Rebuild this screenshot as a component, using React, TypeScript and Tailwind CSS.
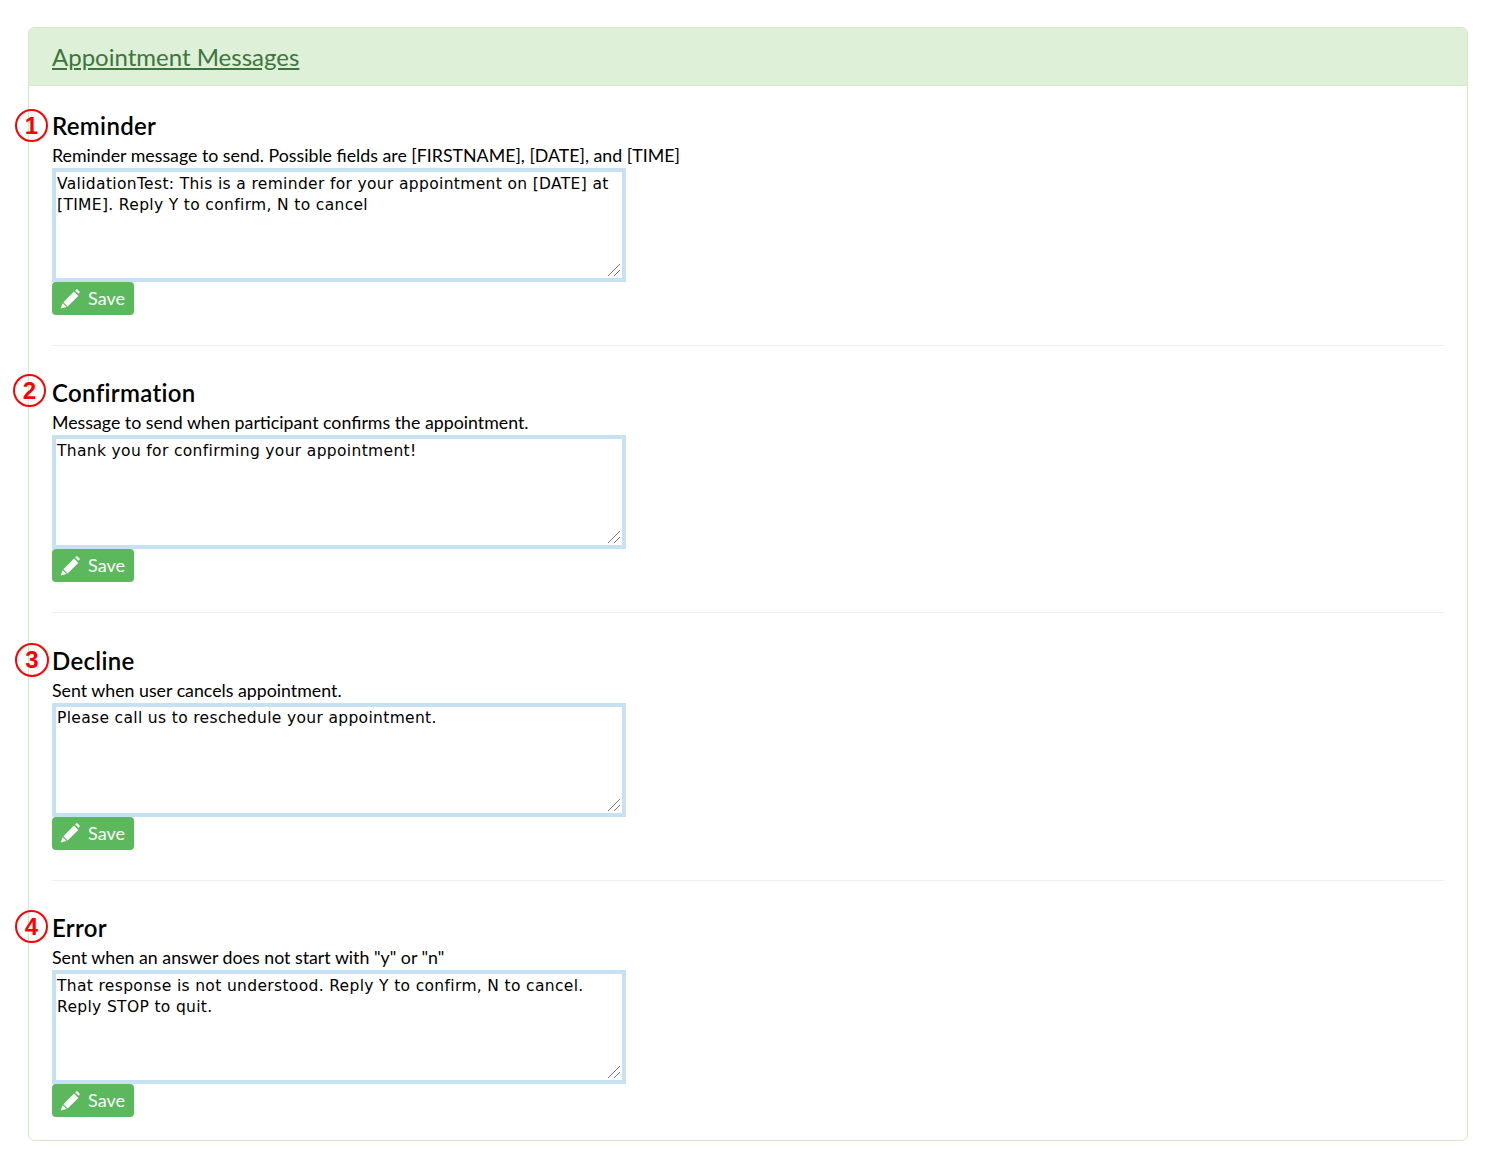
const sections = [
  { n: "1", title: "Reminder", desc: "Reminder message to send. Possible fields are [FIRSTNAME], [DATE], and [TIME]", value: "ValidationTest: This is a reminder for your appointment on [DATE] at [TIME]. Reply Y to confirm, N to cancel", pos: "left-[-37px] top-[0px] w-[33px] h-[33px]" },
  { n: "2", title: "Confirmation", desc: "Message to send when participant confirms the appointment.", value: "Thank you for confirming your appointment!", pos: "left-[-39px] top-[-2px] w-[33px] h-[33px]" },
  { n: "3", title: "Decline", desc: "Sent when user cancels appointment.", value: "Please call us to reschedule your appointment.", pos: "left-[-37px] top-[-1px] w-[34px] h-[34px]" },
  { n: "4", title: "Error", desc: 'Sent when an answer does not start with "y" or "n"', value: "That response is not understood. Reply Y to confirm, N to cancel. Reply STOP to quit.", pos: "left-[-37px] top-[-1px] w-[33px] h-[33px]" },
];

function Pencil() {
  return (
    <svg viewBox="0 0 20 20" className="w-[20px] h-[20px] shrink-0" fill="#fff">
      <path d="M15.2 1.4l1-.9c.4-.3.9-.3 1.3 0l2 2c.3.4.3.9 0 1.3l-1 1z" />
      <path d="M14 2.6l4.3 4.3L7.6 17.4 3.4 13.2z" />
      <path d="M2.6 14.2l3.9 3.9L.6 19.6z" />
    </svg>
  );
}

function Grip() {
  return (
    <svg viewBox="0 0 12 12" className="absolute right-[6px] bottom-[6px] w-[12px] h-[12px] pointer-events-none" fill="none" stroke="#666" strokeWidth="0.9">
      <path d="M0 12L12 0" />
      <path d="M6 12L12 6" />
    </svg>
  );
}

export default function App() {
  return (
    <div className="bg-white min-h-[1170px] pt-[27px] px-[28px] pb-[29px] font-['Lato','Liberation_Sans',sans-serif]">
      <div className="w-[1440px] border border-[#d6e9c6] rounded-[6px]">
        <div className="h-[58px] bg-[#dff0d8] border-b border-[#d6e9c6] rounded-t-[5px] px-[23px] flex items-center">
          <a className="text-[24px] leading-[28px] text-[#3c763d] underline">Appointment Messages</a>
        </div>
        <div className="px-[23px] pt-[23px] pb-[23px]">
          {sections.map((s, i) => (
            <div key={s.n}>
              {i > 0 && <hr className="border-0 border-t border-[#eeeeee] mt-[30px] mb-[30.4px]" />}
              <div className="relative">
                <div className={`absolute ${s.pos} rounded-full border-[2.5px] border-[#ff0000] flex items-center justify-center text-[#ff0000] text-[24px] leading-none font-bold font-['Liberation_Sans',sans-serif]`}>
                  {s.n}
                </div>
                <h3 className="text-[24px] leading-[34px] tracking-[0.33px] font-semibold text-black">{s.title}</h3>
                <p className="text-[17.78px] leading-[26px] text-black mt-[-1px]">{s.desc}</p>
                <div className="relative w-[574px] h-[114px]">
                  <textarea
                    readOnly
                    defaultValue={s.value}
                    className="block resize-none w-[574px] h-[114px] border-[4px] border-[#c6e2f2] px-[1px] pt-[1.5px] pb-0 text-[15.5px] tracking-[0.34px] leading-[21px] text-black font-['DejaVu_Sans',sans-serif] outline-none"
                  />
                  <Grip />
                </div>
                <button className="flex items-center gap-[8px] h-[33px] w-[82px] bg-[#5cb85c] rounded-[4px] pl-[8px] text-white text-[18px]">
                  <Pencil />
                  Save
                </button>
              </div>
            </div>
          ))}
        </div>
      </div>
    </div>
  );
}
